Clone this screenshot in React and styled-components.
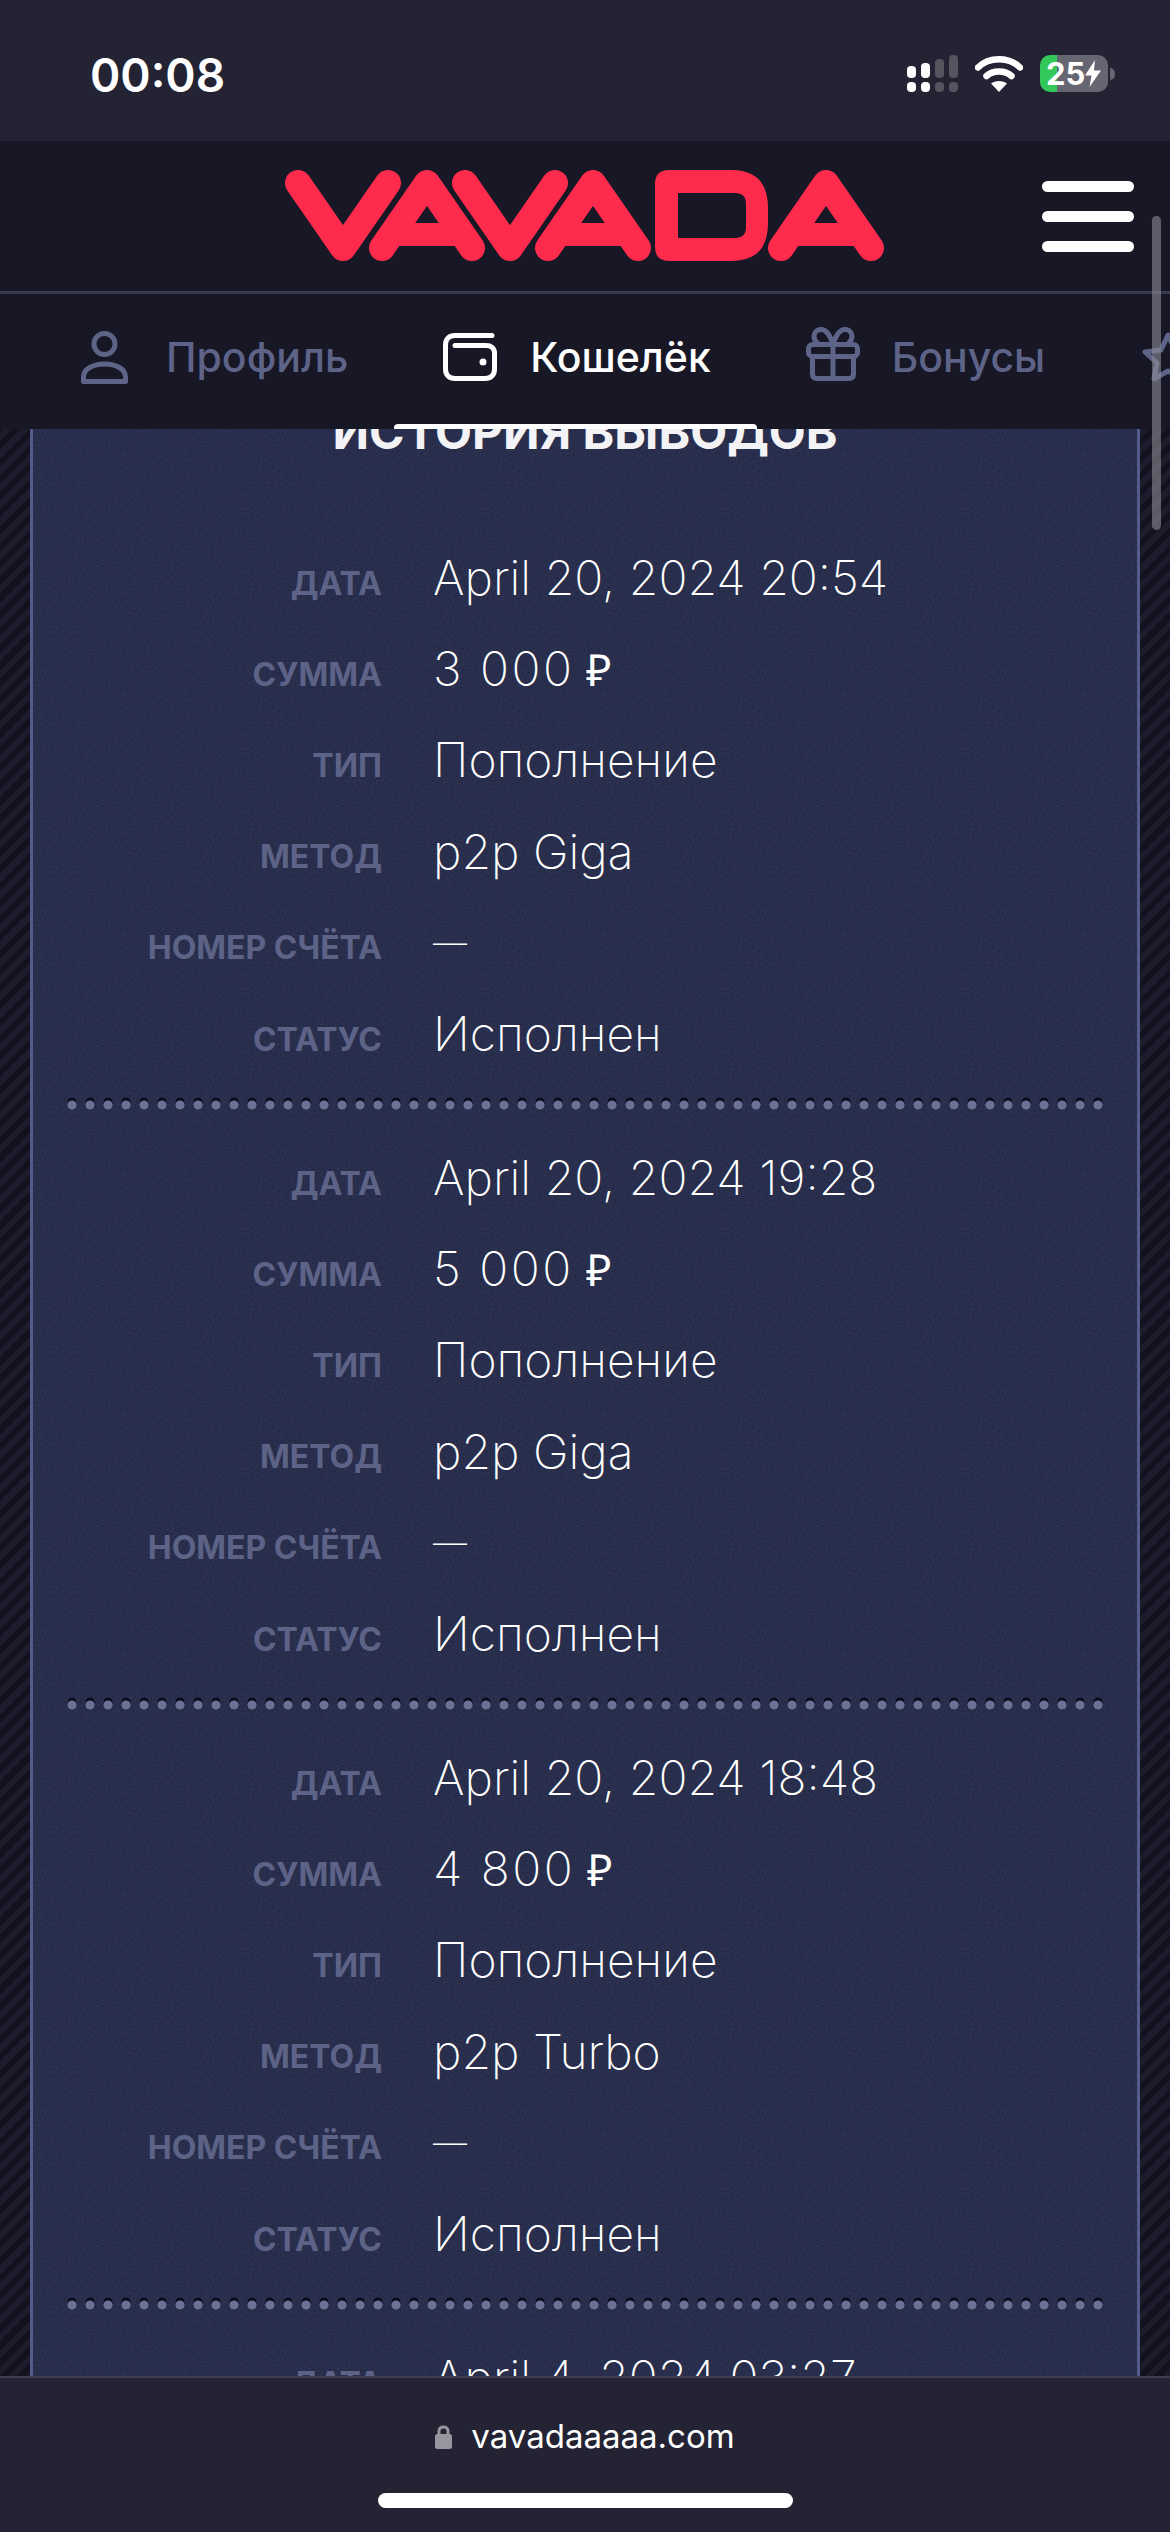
import React from 'react'
import styled, { createGlobalStyle } from 'styled-components'

const GlobalStyle = createGlobalStyle`
    html, body {
        margin: 0;
        padding: 0;
        background: #111120;
    }
`

const noise = `url("data:image/svg+xml,%3Csvg xmlns='http://www.w3.org/2000/svg' width='240' height='240'%3E%3Cfilter id='n'%3E%3CfeTurbulence type='fractalNoise' baseFrequency='0.55' numOctaves='2' stitchTiles='stitch'/%3E%3CfeColorMatrix values='0 0 0 0 0 0 0 0 0 0 0 0 0 0 0 0 0 0 0.45 -0.15'/%3E%3C/filter%3E%3Crect width='240' height='240' filter='url(%23n)'/%3E%3C/svg%3E")`

const Screen = styled.div`
    position: relative;
    width: 1170px;
    height: 2532px;
    display: flex;
    flex-direction: column;
    overflow: hidden;
    font-family: Inter, "Noto Sans", sans-serif;
    background: repeating-linear-gradient(135deg, #12121e 0 6px, #1c1c2d 6px 12px);
`

const StatusBar = styled.div`
    flex: 0 0 141px;
    display: flex;
    align-items: flex-start;
    justify-content: space-between;
    padding: 55px 55px 0 90px;
    box-sizing: border-box;
    background: #232333;
    z-index: 3;
`

const Clock = styled.div`
    font-weight: 600;
    font-size: 46px;
    line-height: 40px;
    color: #fff;
`

const StatusIcons = styled.div`
    display: flex;
    align-items: center;
    gap: 17px;
`

const Battery = styled.div`
    width: 68px;
    height: 37px;
    border-radius: 10px;
    overflow: hidden;
    background: linear-gradient(90deg, #34c759 0 17px, #666672 17px);
    color: #fff;
    font-weight: 700;
    font-size: 31px;
    line-height: 37px;
    padding-left: 6px;
    box-sizing: border-box;
    display: flex;
    align-items: center;
`

const BatteryWrap = styled.div`
    display: flex;
    align-items: center;
    gap: 2px;

    &::after {
        content: '';
        width: 5px;
        height: 12px;
        border-radius: 0 6px 6px 0;
        background: #666672;
    }
`

const Header = styled.div`
    flex: 0 0 153px;
    display: flex;
    align-items: center;
    justify-content: flex-end;
    position: relative;
    box-sizing: border-box;
    padding: 0 36px 0 0;
    background: #171726;
    border-bottom: 3px solid #3a3a4e;
    z-index: 3;
`

const Logo = styled.svg`
    position: absolute;
    left: 285px;
    top: 29px;
`

const Burger = styled.div`
    width: 92px;
    display: flex;
    flex-direction: column;
    gap: 19px;

    span {
        height: 11px;
        border-radius: 6px;
        background: #fff;
    }
`

const Nav = styled.div`
    flex: 0 0 135px;
    display: flex;
    align-items: center;
    background: #171726;
    box-sizing: border-box;
    padding-left: 81px;
    overflow: hidden;
    z-index: 3;
`

const NavItem = styled.div`
    position: relative;
    display: flex;
    align-items: center;
    flex: 0 0 auto;
    gap: ${p => p.$gap}px;
    margin-right: ${p => p.$after}px;
    color: ${p => (p.$active ? '#fff' : '#5e6488')};
    font-weight: 500;
    font-size: 41px;
    height: 135px;
    padding-bottom: 9px;
    box-sizing: border-box;
`

const GiftIcon = styled.svg`
    margin-top: -6px;
`

const ActiveLine = styled.div`
    position: absolute;
    left: -49px;
    right: -46px;
    bottom: 0;
    height: 5px;
    border-radius: 4px 4px 0 0;
    background: #fff;
`

const Main = styled.div`
    flex: 1;
    min-height: 0;
    padding: 0 30px;
    overflow: hidden;
`

const Panel = styled.div`
    display: flow-root;
    height: 100%;
    background-color: #2c3253;
    background-image: ${noise};
    border-left: 3px solid #515c8a;
    border-right: 3px solid #515c8a;
    box-sizing: border-box;
    padding: 0 34px;
`

const Title = styled.h2`
    margin: -24px 0 0;
    text-align: center;
    font-weight: 700;
    font-size: 48px;
    line-height: 54px;
    color: #f3f3f6;
    height: 105px;
`

const Group = styled.div`
    padding: 22px 0 0;
    height: 600px;
    box-sizing: border-box;
    background-image: radial-gradient(circle at 5px 9px, #6c7196 0 4.2px, transparent 4.8px),
        radial-gradient(circle at 5px 6px, #0c0d1c 0 4.2px, transparent 4.8px);
    background-size: 18px 14px;
    background-repeat: repeat-x;
    background-position: 0 bottom;
`

const Row = styled.div`
    display: grid;
    grid-template-columns: 315px 1fr;
    column-gap: 51px;
    align-items: center;
    height: 91.2px;
`

const Label = styled.div`
    text-align: right;
    padding-top: 11px;
    font-weight: 700;
    font-size: 32px;
    color: #5d6387;
`

const Value = styled.div`
    font-weight: 200;
    font-size: ${p => (p.$dash ? 34 : 48)}px;
    letter-spacing: ${p => (p.$sum ? 2.5 : 0)}px;
    color: #fff;
    white-space: nowrap;
`

const Rub = styled.span`
    margin-left: -4px;
    font-family: "Liberation Serif", serif;
    font-weight: 400;
    font-size: 44px;
`

const BottomBar = styled.div`
    flex: 0 0 156px;
    box-sizing: border-box;
    background: #232333;
    border-top: 2px solid #3d3d4c;
    display: flex;
    flex-direction: column;
    align-items: center;
    padding-top: 38px;
    z-index: 3;
`

const Url = styled.div`
    display: flex;
    align-items: center;
    gap: 19px;
    font-size: 33px;
    line-height: 40px;
    color: #fff;
`

const HomeIndicator = styled.div`
    width: 415px;
    height: 15px;
    border-radius: 8px;
    background: #fff;
    margin-top: 37px;
`

const Scrollbar = styled.div`
    position: absolute;
    left: 1152px;
    top: 216px;
    width: 9px;
    height: 314px;
    border-radius: 5px;
    background: rgba(140, 140, 150, 0.6);
    z-index: 4;
`

const rows = [
    { date: 'April 20, 2024 20:54', sum: '3 000', method: 'p2p Giga' },
    { date: 'April 20, 2024 19:28', sum: '5 000', method: 'p2p Giga' },
    { date: 'April 20, 2024 18:48', sum: '4 800', method: 'p2p Turbo' },
]

const LogoV = ({ x }) => (
    <polyline points={`${x + 13},13 ${x + 58},78 ${x + 103},13`} fill="none" stroke="#ff2b4c" strokeWidth="26" strokeLinecap="round" strokeLinejoin="round" />
)

const LogoA = ({ x }) => (
    <g>
        <polyline points={`${x + 13},78 ${x + 58},13 ${x + 103},78`} fill="none" stroke="#ff2b4c" strokeWidth="26" strokeLinecap="round" strokeLinejoin="round" />
        <rect x={x + 25} y="53" width="66" height="23" fill="#ff2b4c" />
    </g>
)

function App() {
    return (
        <Screen>
            <GlobalStyle />
            <StatusBar>
                <Clock>00:08</Clock>
                <StatusIcons>
                    <svg width="51" height="37" viewBox="0 0 51 37">
                        <rect x="0" y="11" width="9" height="12" rx="4" fill="#fff" />
                        <rect x="14" y="8" width="9" height="15" rx="4" fill="#fff" />
                        <rect x="28" y="4" width="9" height="19" rx="4" fill="#55555f" />
                        <rect x="42" y="0" width="9" height="23" rx="4" fill="#55555f" />
                        <rect x="0" y="27" width="9" height="10" rx="4" fill="#fff" />
                        <rect x="14" y="27" width="9" height="10" rx="4" fill="#fff" />
                        <rect x="28" y="27" width="9" height="10" rx="4" fill="#55555f" />
                        <rect x="42" y="27" width="9" height="10" rx="4" fill="#55555f" />
                    </svg>
                    <svg width="48" height="37" viewBox="0 0 48 37">
                        <path d="M3 12.5C14 1.5 34 1.5 45 12.5" fill="none" stroke="#fff" strokeWidth="6.5" strokeLinecap="round" />
                        <path d="M11.5 21C18 15 30 15 36.5 21" fill="none" stroke="#fff" strokeWidth="6.5" strokeLinecap="round" />
                        <path d="M24 37L16 28.5C20 25 28 25 32 28.5Z" fill="#fff" />
                    </svg>
                    <BatteryWrap>
                        <Battery>
                            25
                            <svg width="16" height="27" viewBox="0 0 16 27">
                                <path d="M10 0L0 15.5H6.5L4.5 27L16 10.5H9Z" fill="#fff" />
                            </svg>
                        </Battery>
                    </BatteryWrap>
                </StatusIcons>
            </StatusBar>
            <Header>
                <Logo width="600" height="91" viewBox="0 0 600 91">
                    <LogoV x={0} />
                    <LogoA x={84} />
                    <LogoV x={167} />
                    <LogoA x={250} />
                    <path
                        fillRule="evenodd"
                        fill="#ff2b4c"
                        d="M370 14Q370 0 384 0H446Q483 0 483 38V53Q483 91 446 91H384Q370 91 370 77ZM393 23V68H450Q461 68 461 57V34Q461 23 450 23Z"
                    />
                    <LogoA x={483} />
                </Logo>
                <Burger>
                    <span />
                    <span />
                    <span />
                </Burger>
            </Header>
            <Nav>
                <NavItem $gap={38} $after={95}>
                    <svg width="47" height="53" viewBox="0 0 47 53" fill="none" stroke="#5e6488" strokeWidth="5">
                        <circle cx="23.5" cy="13" r="10.5" />
                        <path d="M2.5 50.5V46C2.5 38 12 33 23.5 33S44.5 38 44.5 46V50.5Z" strokeLinejoin="round" />
                    </svg>
                    Профиль
                </NavItem>
                <NavItem $active $gap={33} $after={95}>
                    <svg width="54" height="48" viewBox="0 0 54 48" fill="none" stroke="#fff" strokeWidth="5" strokeLinecap="round">
                        <path d="M49 2.5H12C6 2.5 2.5 6 2.5 12V36C2.5 42 6 45.5 12 45.5H42C48 45.5 51.5 42 51.5 36V20C51.5 15 48 12.5 43 12.5H12" strokeLinejoin="round" />
                        <circle cx="40" cy="29" r="3.5" fill="#fff" stroke="none" />
                    </svg>
                    Кошелёк
                    <ActiveLine />
                </NavItem>
                <NavItem $gap={32} $after={97}>
                    <GiftIcon width="54" height="54" viewBox="0 0 54 54" fill="none" stroke="#5e6488" strokeWidth="5" strokeLinejoin="round">
                        <rect x="2.5" y="17.5" width="49" height="12" rx="4" />
                        <path d="M6.5 30V47C6.5 50 8 51.5 11 51.5H43C46 51.5 47.5 50 47.5 47V30M27 17V51" />
                        <path d="M27 17C24 8 20 2.5 15 2.5C10.5 2.5 8 6 8 9.5C8 13 10 15 12 17M27 17C30 8 34 2.5 39 2.5C43.5 2.5 46 6 46 9.5C46 13 44 15 42 17" strokeLinecap="round" />
                    </GiftIcon>
                    Бонусы
                </NavItem>
                <NavItem $gap={30} $after={0}>
                    <svg width="52" height="50" viewBox="0 0 52 50" fill="none" stroke="#5e6488" strokeWidth="5" strokeLinejoin="round">
                        <path d="M26 3L33 18L49 20L37 31L40 47L26 39L12 47L15 31L3 20L19 18Z" />
                    </svg>
                </NavItem>
            </Nav>
            <Main>
                <Panel>
                    <Title>ИСТОРИЯ ВЫВОДОВ</Title>
                    {rows.map((item) => (
                        <Group key={item.date}>
                            <Row><Label>ДАТА</Label><Value>{item.date}</Value></Row>
                            <Row><Label>СУММА</Label><Value $sum>{item.sum} <Rub>₽</Rub></Value></Row>
                            <Row><Label>ТИП</Label><Value>Пополнение</Value></Row>
                            <Row><Label>МЕТОД</Label><Value>{item.method}</Value></Row>
                            <Row><Label>НОМЕР СЧЁТА</Label><Value $dash>—</Value></Row>
                            <Row><Label>СТАТУС</Label><Value>Исполнен</Value></Row>
                        </Group>
                    ))}
                    <Group>
                        <Row><Label>ДАТА</Label><Value>April 4, 2024 03:27</Value></Row>
                    </Group>
                </Panel>
            </Main>
            <BottomBar>
                <Url>
                    <svg width="17" height="25" viewBox="0 0 17 25" fill="none">
                        <path d="M4 11V7C4 1.5 13 1.5 13 7V11" stroke="#96969f" strokeWidth="3" />
                        <rect x="0" y="10" width="17" height="15" rx="2.5" fill="#96969f" />
                    </svg>
                    vavadaaaaa.com
                </Url>
                <HomeIndicator />
            </BottomBar>
            <Scrollbar />
        </Screen>
    )
}

export default App
